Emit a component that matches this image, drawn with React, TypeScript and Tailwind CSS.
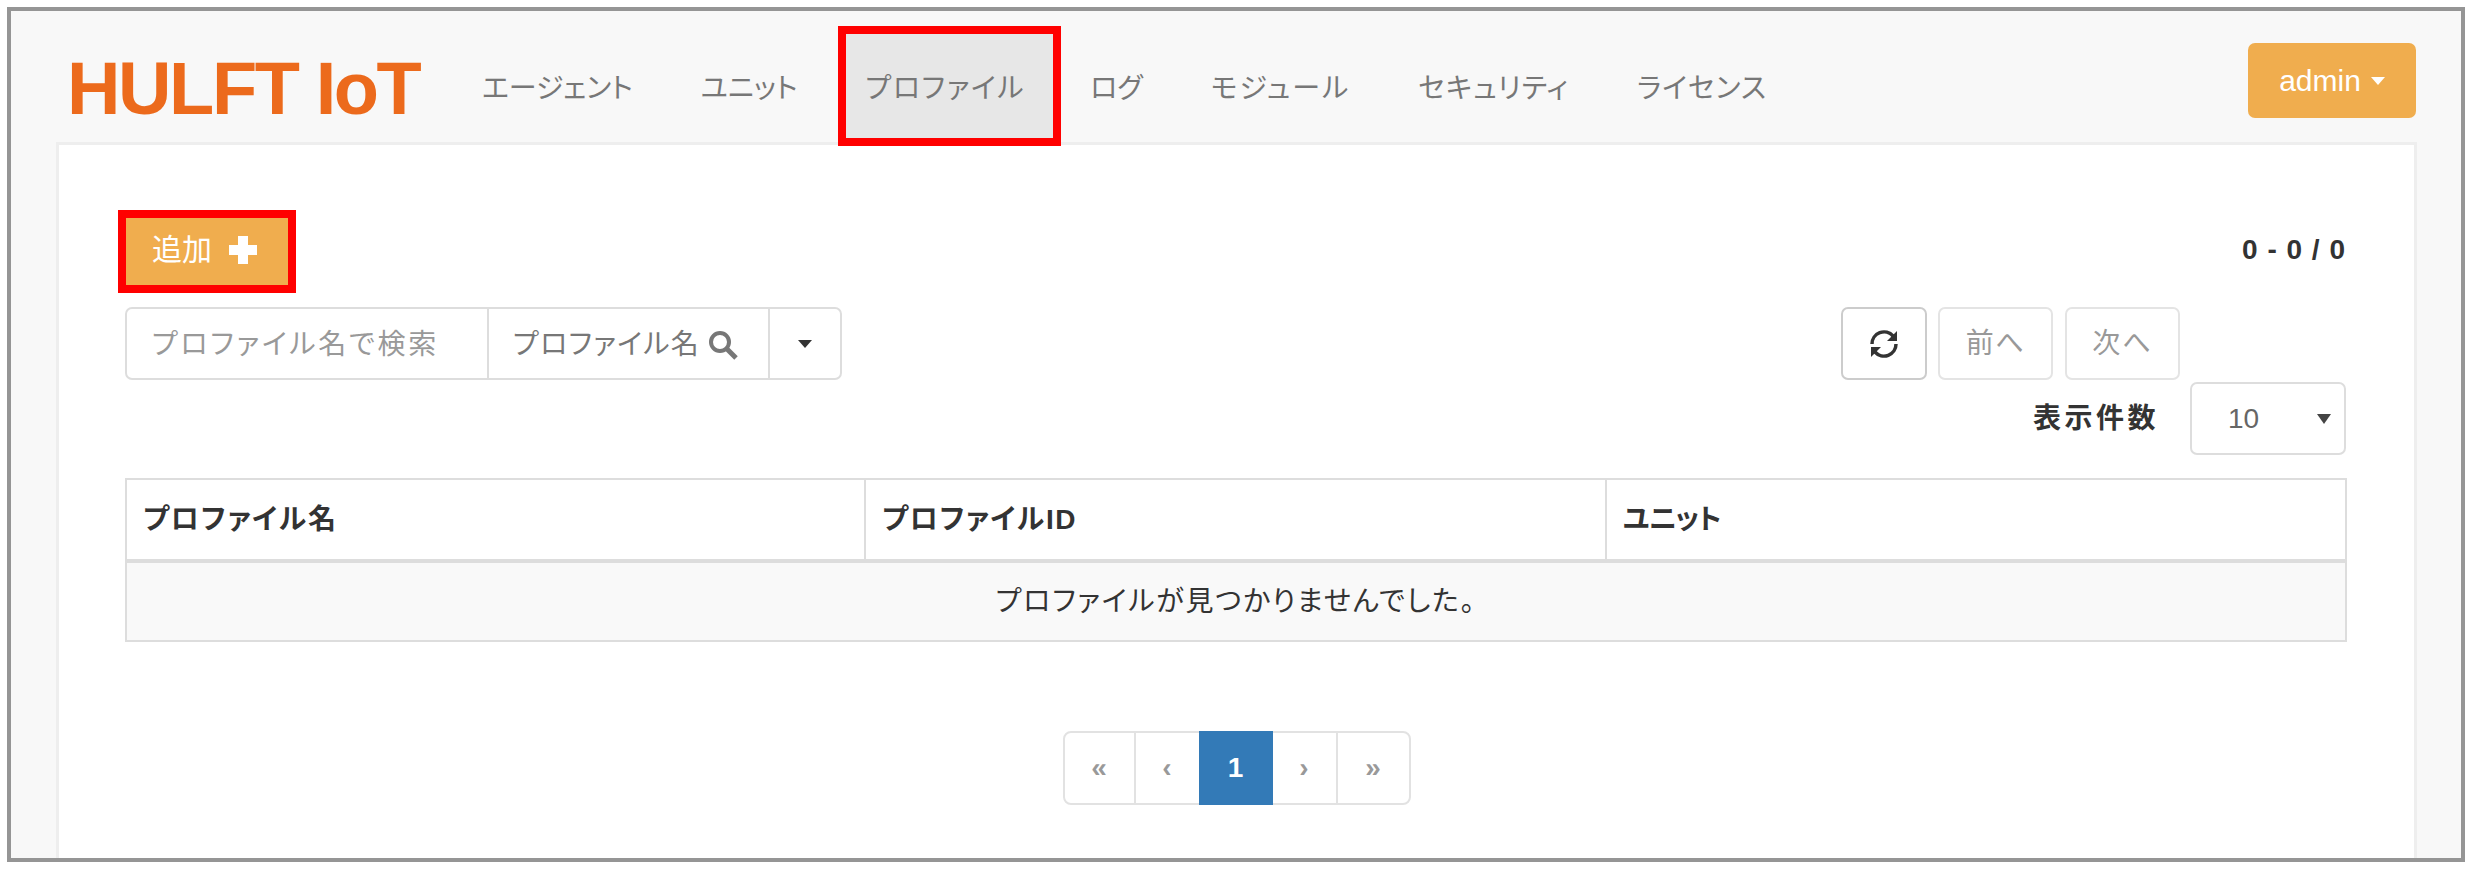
import React from "react";

const navItems = [
  { label: "エージェント", className: "" },
  { label: "ユニット", className: "" },
  { label: "プロファイル", className: "tracking-[1.6px]", active: true },
  { label: "ログ", className: "" },
  { label: "モジュール", className: "tracking-[2px]" },
  { label: "セキュリティ", className: "tracking-[1px]" },
  { label: "ライセンス", className: "tracking-[1px]" },
];

const Caret: React.FC<{ className?: string }> = ({ className }) => (
  <span className={`inline-block w-0 h-0 border-x-[7px] border-t-[8px] border-x-transparent ${className ?? ""}`} />
);

const SearchIcon = () => (
  <svg width="32" height="30" viewBox="0 0 32 30" fill="none" stroke="#777" strokeWidth="4">
    <circle cx="13" cy="12" r="9" />
    <path d="M20 19 L29 28" strokeWidth="5" />
  </svg>
);

const PlusIcon = () => (
  <svg width="30" height="30" viewBox="0 0 30 30" fill="#fff">
    <path d="M10 1 H20 V10 H29 V20 H20 V29 H10 V20 H1 V10 H10 Z" />
  </svg>
);

const RefreshIcon = () => (
  <svg width="30" height="30" viewBox="0 0 30 30" fill="#333" stroke="none">
    <path d="M3 15 A12 12 0 0 1 24 7" fill="none" stroke="#333" strokeWidth="3.5" />
    <path d="M27 15 A12 12 0 0 1 6 23" fill="none" stroke="#333" strokeWidth="3.5" />
    <path d="M18 12 L28 12 L28 2 Z" />
    <path d="M12 18 L2 18 L2 28 Z" />
  </svg>
);

const Header = () => (
  <div className="flex items-start h-[131px] pl-[56px] pr-[45px]">
    <div className="w-[352px] mt-[41px] text-[74px] leading-[74px] font-bold text-[#ec6a1c] tracking-[-2.4px] whitespace-nowrap">
      HULFT IoT
    </div>
    <nav className="flex ml-[29px] mt-[23px] text-[28px] text-[#777]">
      {navItems.map((item) =>
        item.active ? (
          <a
            key={item.label}
            className={`relative z-10 h-[104px] flex items-center pt-[6px] pl-[19px] pr-[28px] ml-[15px] mr-[3px] bg-[#e7e7e7] outline-[8px] outline-[#f00] whitespace-nowrap ${item.className}`}
          >
            {item.label}
          </a>
        ) : (
          <a key={item.label} className={`h-[104px] flex items-center pt-[6px] px-[34px] whitespace-nowrap ${item.className}`}>
            {item.label}
          </a>
        )
      )}
    </nav>
    <button className="ml-auto mt-[32px] w-[168px] h-[75px] flex items-center justify-center gap-[10px] rounded-[7px] bg-[#f0ad4e] text-white text-[30px]">
      admin
      <Caret className="border-t-white" />
    </button>
  </div>
);

const SearchRow = () => (
  <div className="flex items-start mt-[22px] pr-[166px]">
    <div className="flex h-[73px] w-[717px] border-2 border-[#ddd] rounded-[7px] text-[28px]">
      <div className="w-[362px] flex items-center pt-[2px] pl-[25px] text-[#999] tracking-[2.7px] border-r-2 border-[#ddd] whitespace-nowrap">
        プロファイル名で検索
      </div>
      <div className="w-[281px] flex items-center gap-[7px] pt-[2px] pl-[24px] text-[#777] tracking-[1.3px] border-r-2 border-[#ddd] whitespace-nowrap">
        プロファイル名
        <SearchIcon />
      </div>
      <div className="flex-1 flex items-center justify-center">
        <Caret className="border-t-[#333]" />
      </div>
    </div>
    <button className="ml-auto w-[86px] h-[73px] flex items-center justify-center border-2 border-[#ccc] rounded-[7px]">
      <RefreshIcon />
    </button>
    <button className="ml-[11px] w-[115px] h-[73px] border-2 border-[#e4e4e4] rounded-[7px] text-[28px] text-[#999] tracking-[1.5px]">
      前へ
    </button>
    <button className="ml-[12px] w-[115px] h-[73px] border-2 border-[#e4e4e4] rounded-[7px] text-[28px] text-[#999] tracking-[2px]">
      次へ
    </button>
  </div>
);

const PageSize = () => (
  <div className="flex items-center justify-end gap-[31px] mt-[2px]">
    <span className="text-[28px] font-bold text-[#333] tracking-[3.5px]">表示件数</span>
    <div className="w-[156px] h-[73px] flex items-center justify-between pl-[36px] pr-[13px] border-2 border-[#ddd] rounded-[7px] text-[28px] text-[#666]">
      10
      <Caret className="border-t-[#444] border-x-[6px] border-t-[10px]" />
    </div>
  </div>
);

const ProfileTable = () => (
  <table className="w-[2220px] mt-[23px] table-fixed border-collapse text-[28px] text-[#333]">
    <colgroup>
      <col className="w-[739px]" />
      <col className="w-[741px]" />
      <col className="w-[740px]" />
    </colgroup>
    <thead>
      <tr className="h-[82px]">
        <th className="text-left pl-[16px] tracking-[1.8px] border-2 border-b-4 border-[#ddd]">プロファイル名</th>
        <th className="text-left pl-[16px] tracking-[1.6px] border-2 border-b-4 border-[#ddd]">プロファイルID</th>
        <th className="text-left pl-[16px] tracking-[-1px] border-2 border-b-4 border-[#ddd]">ユニット</th>
      </tr>
    </thead>
    <tbody>
      <tr className="h-[80px] bg-[#f9f9f9]">
        <td colSpan={3} className="text-center tracking-[1.75px] border-2 border-[#ddd]">
          プロファイルが見つかりませんでした。
        </td>
      </tr>
    </tbody>
  </table>
);

const Pager = () => (
  <div className="flex justify-center mt-[89px] pl-[2px] text-[28px] font-bold text-[#999]">
    <div className="flex h-[74px] border-2 border-[#e2e2e2] rounded-[8px]">
      <span className="w-[71px] flex items-center justify-center border-r-2 border-[#e2e2e2]">«</span>
      <span className="w-[63px] flex items-center justify-center">‹</span>
      <span className="w-[74px] my-[-2px] flex items-center justify-center bg-[#337ab7] text-white">1</span>
      <span className="w-[65px] flex items-center justify-center border-r-2 border-[#e2e2e2]">›</span>
      <span className="w-[71px] flex items-center justify-center">»</span>
    </div>
  </div>
);

export default function App() {
  return (
    <div className="w-[2472px] h-[869px] p-[7px] bg-white overflow-hidden font-['Liberation_Sans','Noto_Sans_CJK_JP',sans-serif] [font-feature-settings:'palt']">
      <div className="h-full flex flex-col border-4 border-[#959595] bg-[#f8f8f8]">
        <Header />
        <main className="flex-1 ml-[45px] mr-[44px] bg-white border-x-[3px] border-t-[3px] border-[#eee] pl-[66px] pr-[68px] pt-[73px]">
          <div className="flex items-center justify-between">
            <button className="ml-[1px] w-[162px] h-[67px] flex items-center gap-[16px] pb-[4px] pl-[26px] bg-[#f0ad4e] outline-[8px] outline-[#f00] text-[30px] text-white">
              追加
              <PlusIcon />
            </button>
            <span className="pb-[4px] text-[28px] font-bold text-[#333] tracking-[1px]">0 - 0 / 0</span>
          </div>
          <SearchRow />
          <PageSize />
          <ProfileTable />
          <Pager />
        </main>
      </div>
    </div>
  );
}
